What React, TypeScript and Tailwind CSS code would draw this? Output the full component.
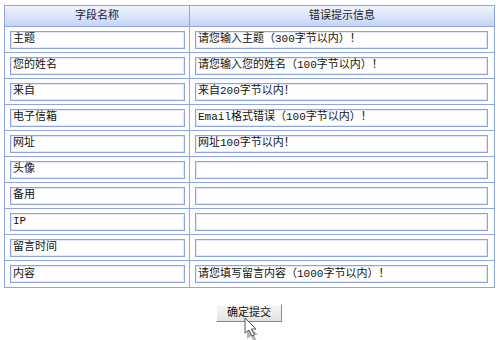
import React from "react";

const rows: { name: string; hint: string }[] = [
  { name: "主题", hint: "请您输入主题（300字节以内）！" },
  { name: "您的姓名", hint: "请您输入您的姓名（100字节以内）！" },
  { name: "来自", hint: "来自200字节以内！" },
  { name: "电子信箱", hint: "Email格式错误（100字节以内）！" },
  { name: "网址", hint: "网址100字节以内！" },
  { name: "头像", hint: "" },
  { name: "备用", hint: "" },
  { name: "IP", hint: "" },
  { name: "留言时间", hint: "" },
  { name: "内容", hint: "请您填写留言内容（1000字节以内）！" },
];

const font = { fontFamily: '"Liberation Mono", "Noto Sans CJK SC", monospace' };

function Field({ value, width }: { value: string; width: string }) {
  return (
    <div
      className={`${width} h-[18px] border border-[#8ea4e0] bg-white shadow-[inset_0_0_0_1px_#e3e9fa] flex items-center pl-[2px] text-[11px] leading-none text-[#111] whitespace-nowrap overflow-hidden`}
    >
      {value}
    </div>
  );
}

export default function App() {
  return (
    <div className="relative w-[500px] h-[340px] bg-white overflow-hidden" style={font}>
      <div className="pt-[5px] pl-[4px]">
        <div className="w-[491px] border border-[#8ea6e4] grid grid-cols-[185px_304px]">
          <div className="h-[21px] border-b border-r border-[#8ea6e4] bg-gradient-to-b from-[#f1f4fd] to-[#c5d4f7] flex items-center justify-center text-[11px] text-[#222]">
            字段名称
          </div>
          <div className="h-[21px] border-b border-[#8ea6e4] bg-gradient-to-b from-[#f1f4fd] to-[#c5d4f7] flex items-center justify-center text-[11px] text-[#222]">
            错误提示信息
          </div>
          {rows.map((r, i) => (
            <React.Fragment key={r.name}>
              <div
                className={`h-[26px] border-r border-[#8ea6e4] ${i < rows.length - 1 ? "border-b" : ""} flex items-center pl-[5px]`}
              >
                <Field value={r.name} width="w-[175px]" />
              </div>
              <div
                className={`h-[26px] border-[#8ea6e4] ${i < rows.length - 1 ? "border-b" : ""} flex items-center pl-[5px]`}
              >
                <Field value={r.hint} width="w-[293px]" />
              </div>
            </React.Fragment>
          ))}
        </div>
      </div>
      <div className="flex justify-center pt-[16px] pl-[0px]">
        <button
          className="w-[66px] h-[18px] ml-[-2px] bg-gradient-to-b from-[#f7f7f7] to-[#e2e2e2] border border-t-[#ffffff] border-l-[#ffffff] border-r-[#8a8a8a] border-b-[#8a8a8a] text-[11px] text-[#111] leading-none flex items-center justify-center"
        >
          确定提交
        </button>
      </div>
      {/* mouse pointer resting over the submit button */}
      <svg
        className="absolute left-[243px] top-[316px]"
        width="24"
        height="26"
        viewBox="0 0 24 26"
        style={{ filter: "blur(0.6px)" }}
      >
        <path d="M4 8 L15 19 L11 19 L14 25 L11 26 L8 20 L4 23 Z" fill="#666" opacity="0.5" />
        <path d="M2 2 L13 13 L8.5 13 L11.5 19 L9 20 L6 14 L2 17 Z" fill="#fff" stroke="#555" strokeWidth="1" />
      </svg>
    </div>
  );
}
